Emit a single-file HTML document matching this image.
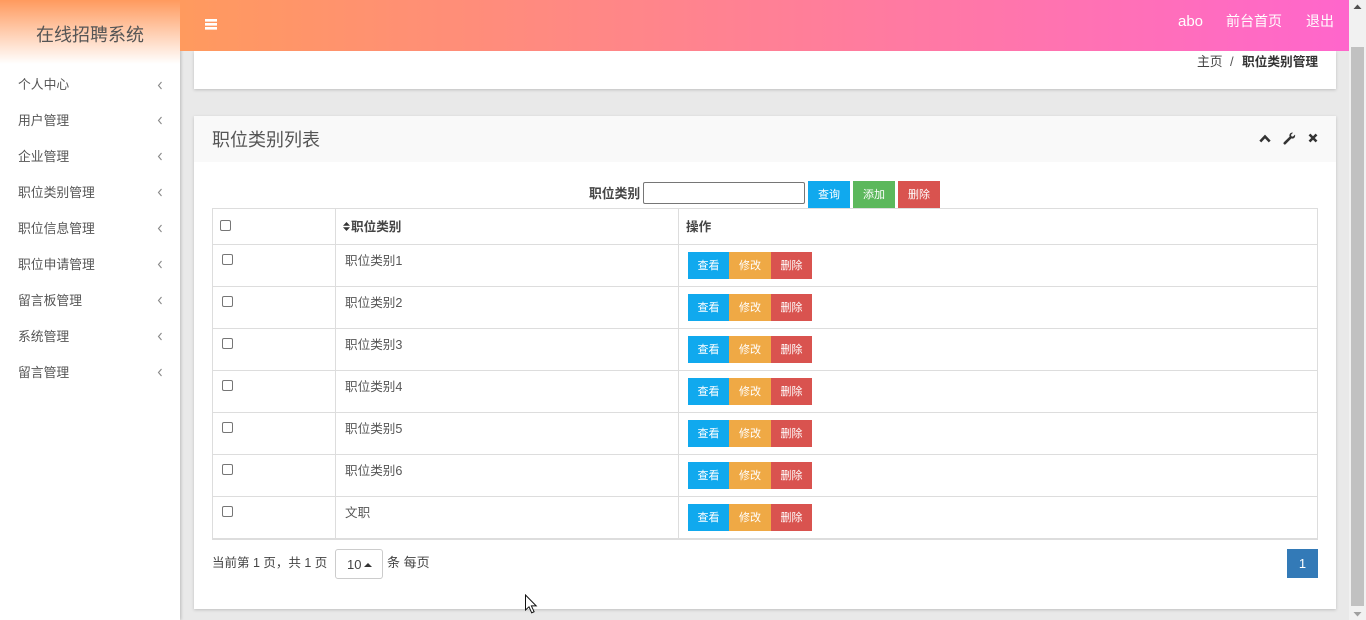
<!DOCTYPE html>
<html lang="zh-CN">
<head>
<meta charset="utf-8">
<title>职位类别列表</title>
<style>
*{box-sizing:border-box}
html,body{margin:0;padding:0;width:1366px;height:620px;overflow:hidden;background:#e9e9e9;font-family:"Liberation Sans","Noto Sans CJK SC",sans-serif;font-size:13px;color:#444}
.a{position:absolute;white-space:nowrap}
#side{left:0;top:0;width:180px;height:620px;background:#fff;box-shadow:1px 0 3px rgba(0,0,0,.2)}
#brand{left:0;top:0;width:180px;height:64px;background:linear-gradient(to bottom,#ff9a5e,#fff);text-align:center;font-size:18px;line-height:70px;color:#555}
.m{left:18px;font-size:12.8px;line-height:20px;color:#555}
.ch{left:157px;width:6px;height:9px}
#top{left:180px;top:0;width:1169px;height:51px;background:linear-gradient(to right,#ff9a5e,#ff66cc)}
.tl{color:#fff;font-size:14px;line-height:20px;top:11px}
#crumb{left:194px;top:51px;width:1142px;height:38px;background:#fff;box-shadow:0 1px 3px rgba(0,0,0,.18)}
#panel{left:194px;top:116px;width:1142px;height:493px;background:#fff;box-shadow:0 1px 3px rgba(0,0,0,.18)}
#phead{left:194px;top:116px;width:1142px;height:46px;background:#f9f9f9}
.btn{height:27px;line-height:28px;text-align:center;color:#fff;font-size:11px}
.b{background:#10a9ee}.o{background:#efa945}.r{background:#d9534f}.g{background:#5cb85c}
.hl{background:#ddd;height:1px;left:212px;width:1106px}
.vl{background:#ddd;width:1px;top:208px;height:332px}
.cb{width:11px;height:11px;border:1px solid #767676;border-radius:2px;background:#fff}
.cell{font-size:12.6px;line-height:20px;color:#555}
.ch path{fill:none;stroke:#888;stroke-width:1.1}
</style>
</head>
<body>
<div class="a" id="side"></div>
<div class="a" id="brand">在线招聘系统</div>
<div class="a m" style="top:75px">个人中心</div>
<div class="a m" style="top:111px">用户管理</div>
<div class="a m" style="top:147px">企业管理</div>
<div class="a m" style="top:183px">职位类别管理</div>
<div class="a m" style="top:219px">职位信息管理</div>
<div class="a m" style="top:255px">职位申请管理</div>
<div class="a m" style="top:291px">留言板管理</div>
<div class="a m" style="top:327px">系统管理</div>
<div class="a m" style="top:363px">留言管理</div>
<svg class="a ch" style="top:81px" viewBox="0 0 6 9"><path d="M4.500 1 1.500 4.500 4.500 8"/></svg>
<svg class="a ch" style="top:116px" viewBox="0 0 6 9"><path d="M4.500 1 1.500 4.500 4.500 8"/></svg>
<svg class="a ch" style="top:152px" viewBox="0 0 6 9"><path d="M4.500 1 1.500 4.500 4.500 8"/></svg>
<svg class="a ch" style="top:188px" viewBox="0 0 6 9"><path d="M4.500 1 1.500 4.500 4.500 8"/></svg>
<svg class="a ch" style="top:224px" viewBox="0 0 6 9"><path d="M4.500 1 1.500 4.500 4.500 8"/></svg>
<svg class="a ch" style="top:260px" viewBox="0 0 6 9"><path d="M4.500 1 1.500 4.500 4.500 8"/></svg>
<svg class="a ch" style="top:296px" viewBox="0 0 6 9"><path d="M4.500 1 1.500 4.500 4.500 8"/></svg>
<svg class="a ch" style="top:332px" viewBox="0 0 6 9"><path d="M4.500 1 1.500 4.500 4.500 8"/></svg>
<svg class="a ch" style="top:368px" viewBox="0 0 6 9"><path d="M4.500 1 1.500 4.500 4.500 8"/></svg>

<div class="a" id="crumb"></div>
<div class="a" style="left:1197px;top:52px;font-size:12.8px;line-height:20px;color:#444">主页</div>
<div class="a" style="left:1230px;top:52px;font-size:13px;line-height:20px;color:#555">/</div>
<div class="a" style="left:1242px;top:52px;font-size:12.7px;line-height:20px;font-weight:bold;color:#333">职位类别管理</div>

<div class="a" id="top"></div>
<svg class="a" style="left:205px;top:19px" width="12" height="11" viewBox="0 0 12 11"><path d="M0 0h12v2.600H0zM0 4h12v2.600H0zM0 8h12v2.600H0z" fill="#fff"/></svg>
<div class="a tl" style="left:1178px;top:12px;font-size:15px">abo</div>
<div class="a tl" style="left:1226px">前台首页</div>
<div class="a tl" style="left:1306px">退出</div>

<div class="a" id="panel"></div>
<div class="a" id="phead"></div>
<div class="a" style="left:212px;top:128px;font-size:18px;line-height:24px;color:#555">职位类别列表</div>
<svg class="a" style="left:1259px;top:134px" width="12" height="9" viewBox="0 0 12 9"><path d="M1.300 7.500 6 2.500l4.700 5" fill="none" stroke="#333" stroke-width="2.600"/></svg>
<svg class="a" style="left:1283px;top:132px" width="13" height="13" viewBox="0 0 13 13"><path d="M1.800 11.200 7 6" fill="none" stroke="#333" stroke-width="2.600" stroke-linecap="round"/><path d="M12 2.600 9.900 4.600 8.400 4.200 8 2.700 10 .7C8.200.2 6.200 1.600 6.400 3.900 6.500 5.600 8.200 6.900 10 6.500 11.600 6.100 12.500 4.400 12 2.600Z" fill="#333"/></svg>
<svg class="a" style="left:1308px;top:133px" width="10" height="10" viewBox="0 0 10 10"><path d="M1.500 1.500l7 7M8.500 1.500l-7 7" fill="none" stroke="#333" stroke-width="2.600"/></svg>

<div class="a" style="left:589px;top:184px;font-size:12.8px;line-height:20px;font-weight:bold;color:#444">职位类别</div>
<div class="a" style="left:643px;top:182px;width:162px;height:22px;border:1px solid #767676;border-radius:2px;background:#fff"></div>
<div class="a btn b" style="left:808px;top:181px;width:42px">查询</div>
<div class="a btn g" style="left:853px;top:181px;width:42px">添加</div>
<div class="a btn r" style="left:898px;top:181px;width:42px">删除</div>

<div class="a hl" style="top:208px"></div>
<div class="a hl" style="top:244px"></div>
<div class="a hl" style="top:286px"></div>
<div class="a hl" style="top:328px"></div>
<div class="a hl" style="top:370px"></div>
<div class="a hl" style="top:412px"></div>
<div class="a hl" style="top:454px"></div>
<div class="a hl" style="top:496px"></div>
<div class="a hl" style="top:538px;height:2px"></div>
<div class="a vl" style="left:212px"></div>
<div class="a vl" style="left:335px"></div>
<div class="a vl" style="left:678px"></div>
<div class="a vl" style="left:1317px"></div>

<div class="a cb" style="left:220px;top:220px"></div>
<svg class="a" style="left:343px;top:222px" width="7" height="9" viewBox="0 0 7 9"><path d="M3.500 0 7 3.800H0zM3.500 9 0 5.200h7z" fill="#333"/></svg>
<div class="a" style="left:351px;top:217px;font-size:12.6px;line-height:20px;font-weight:bold;color:#444">职位类别</div>
<div class="a" style="left:686px;top:217px;font-size:12.6px;line-height:20px;font-weight:bold;color:#444">操作</div>

<div class="a cb" style="left:222px;top:254px"></div>
<div class="a cell" style="left:345px;top:251px">职位类别1</div>
<div class="a btn b" style="left:688px;top:252px;width:41px">查看</div><div class="a btn o" style="left:729px;top:252px;width:42px">修改</div><div class="a btn r" style="left:771px;top:252px;width:41px">删除</div>

<div class="a cb" style="left:222px;top:296px"></div>
<div class="a cell" style="left:345px;top:293px">职位类别2</div>
<div class="a btn b" style="left:688px;top:294px;width:41px">查看</div><div class="a btn o" style="left:729px;top:294px;width:42px">修改</div><div class="a btn r" style="left:771px;top:294px;width:41px">删除</div>

<div class="a cb" style="left:222px;top:338px"></div>
<div class="a cell" style="left:345px;top:335px">职位类别3</div>
<div class="a btn b" style="left:688px;top:336px;width:41px">查看</div><div class="a btn o" style="left:729px;top:336px;width:42px">修改</div><div class="a btn r" style="left:771px;top:336px;width:41px">删除</div>

<div class="a cb" style="left:222px;top:380px"></div>
<div class="a cell" style="left:345px;top:377px">职位类别4</div>
<div class="a btn b" style="left:688px;top:378px;width:41px">查看</div><div class="a btn o" style="left:729px;top:378px;width:42px">修改</div><div class="a btn r" style="left:771px;top:378px;width:41px">删除</div>

<div class="a cb" style="left:222px;top:422px"></div>
<div class="a cell" style="left:345px;top:419px">职位类别5</div>
<div class="a btn b" style="left:688px;top:420px;width:41px">查看</div><div class="a btn o" style="left:729px;top:420px;width:42px">修改</div><div class="a btn r" style="left:771px;top:420px;width:41px">删除</div>

<div class="a cb" style="left:222px;top:464px"></div>
<div class="a cell" style="left:345px;top:461px">职位类别6</div>
<div class="a btn b" style="left:688px;top:462px;width:41px">查看</div><div class="a btn o" style="left:729px;top:462px;width:42px">修改</div><div class="a btn r" style="left:771px;top:462px;width:41px">删除</div>

<div class="a cb" style="left:222px;top:506px"></div>
<div class="a cell" style="left:345px;top:503px">文职</div>
<div class="a btn b" style="left:688px;top:504px;width:41px">查看</div><div class="a btn o" style="left:729px;top:504px;width:42px">修改</div><div class="a btn r" style="left:771px;top:504px;width:41px">删除</div>

<div class="a" style="left:212px;top:553px;font-size:12.500px;line-height:20px;color:#444">当前第 1 页，共 1 页</div>
<div class="a" style="left:335px;top:549px;width:48px;height:30px;border:1px solid #ccc;border-radius:3px;background:#fff;font-size:13px;line-height:30px;color:#444;padding-left:11px">10</div>
<svg class="a" style="left:364px;top:563px" width="8" height="4" viewBox="0 0 8 4"><path d="M4 0 8 4H0z" fill="#333"/></svg>
<div class="a" style="left:387px;top:553px;font-size:13px;line-height:20px;color:#444">条 每页</div>
<div class="a" style="left:1287px;top:549px;width:31px;height:29px;background:#337ab7;color:#fff;text-align:center;font-size:13px;line-height:29px">1</div>

<svg class="a" style="left:524px;top:594px" width="14" height="20" viewBox="0 0 14 20"><path d="M1.500 1v15l3.500-3.200 2.700 6 2.400-1.100-2.700-5.800h4.800z" fill="#fff" stroke="#111" stroke-width="1"/></svg>

<div class="a" style="left:1349px;top:0;width:17px;height:620px;background:#f1f1f1"></div>
<div class="a" style="left:1351px;top:47px;width:13px;height:559px;background:#c1c1c1"></div>
<svg class="a" style="left:1353px;top:4px" width="9" height="6" viewBox="0 0 9 6"><path d="M4.500 0.500 8.500 5H.5z" fill="#505050"/></svg>
<svg class="a" style="left:1353px;top:611px" width="9" height="6" viewBox="0 0 9 6"><path d="M4.500 5.500.5 1h8z" fill="#a0a0a0"/></svg>
</body>
</html>
